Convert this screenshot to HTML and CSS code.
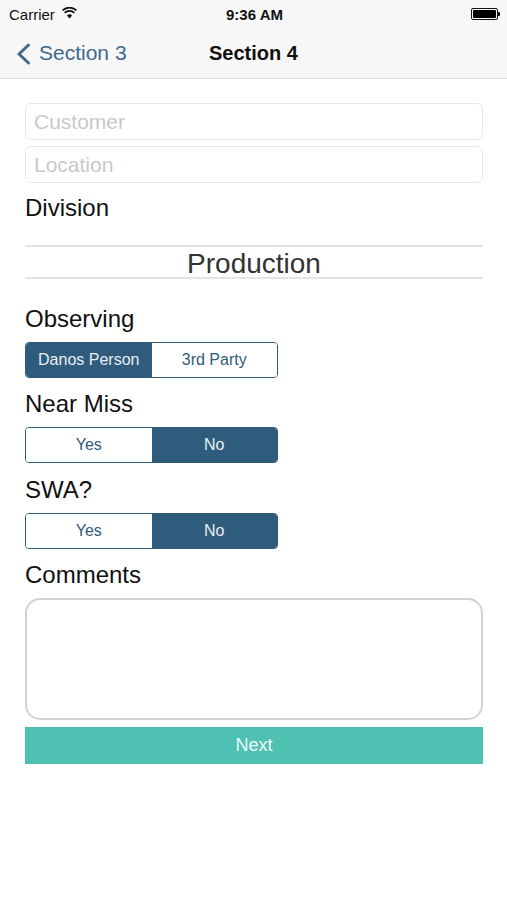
FILE: index.html
```html
<!DOCTYPE html>
<html>
<head>
<meta charset="utf-8">
<link rel="stylesheet" href="styles.css">
</head>
<body>
<div class="screen">
  <header class="topbar">
    <div class="status">
      <div class="status-left">
        <span class="carrier">Carrier</span>
        <svg class="wifi" width="15" height="12" viewBox="0 0 15 12">
          <path d="M7.5 11.5 L4.9 8.4 A4 4 0 0 1 10.1 8.4 Z" fill="#111"/>
          <path d="M2.6 5.9 A7 7 0 0 1 12.4 5.9" fill="none" stroke="#111" stroke-width="1.7"/>
          <path d="M0.6 3.4 A10 10 0 0 1 14.4 3.4" fill="none" stroke="#111" stroke-width="1.7"/>
        </svg>
      </div>
      <span class="time">9:36 AM</span>
      <div class="status-right">
        <span class="battery"><span class="battery-fill"></span></span><span class="battery-nub"></span>
      </div>
    </div>
    <nav class="nav">
      <div class="back">
        <svg class="chevron" width="17" height="22" viewBox="0 0 17 22">
          <path d="M13.5 2 L4 11 L13.5 20" fill="none" stroke="#3f6a8b" stroke-width="3" stroke-linecap="round" stroke-linejoin="round"/>
        </svg>
        <span class="back-label">Section 3</span>
      </div>
      <div class="title">Section 4</div>
      <div></div>
    </nav>
  </header>

  <main class="content">
    <div class="field"><span class="placeholder">Customer</span></div>
    <div class="field field-second"><span class="placeholder">Location</span></div>
    <div class="label label-division">Division</div>
    <div class="picker">Production</div>

    <div class="label label-first">Observing</div>
    <div class="segmented">
      <div class="seg active">Danos Person</div>
      <div class="seg">3rd Party</div>
    </div>

    <div class="label">Near Miss</div>
    <div class="segmented">
      <div class="seg">Yes</div>
      <div class="seg active">No</div>
    </div>

    <div class="label label-swa">SWA?</div>
    <div class="segmented">
      <div class="seg">Yes</div>
      <div class="seg active">No</div>
    </div>

    <div class="label">Comments</div>
    <div class="textarea"></div>
    <button class="next">Next</button>
  </main>
</div>
</body>
</html>
```

FILE: styles.css
```css
* { box-sizing: border-box; }

html, body {
  margin: 0;
  padding: 0;
  background: #ffffff;
}

body {
  font-family: "Liberation Sans", Arial, sans-serif;
  color: #111;
}

.screen {
  width: 507px;
  min-height: 900px;
  background: #fff;
}

.topbar {
  background: #f7f7f7;
  border-bottom: 1px solid #dcdcdc;
}

.status {
  height: 28px;
  display: grid;
  grid-template-columns: 1fr auto 1fr;
  align-items: center;
  padding: 0 7px 0 9px;
}

.status-left {
  display: flex;
  align-items: center;
  gap: 7px;
}

.carrier {
  font-size: 15px;
  color: #111;
}

.wifi { margin-top: -2px; }

.time {
  font-size: 15px;
  font-weight: bold;
  color: #111;
}

.status-right {
  display: flex;
  align-items: center;
  justify-content: flex-end;
}

.battery {
  width: 27px;
  height: 12px;
  border: 1px solid #111;
  border-radius: 2px;
  padding: 1px;
  display: flex;
}

.battery-fill {
  flex: 1;
  background: #000;
  border-radius: 1px;
}

.battery-nub {
  width: 2px;
  height: 4px;
  background: #111;
  border-radius: 0 1px 1px 0;
}

.nav {
  height: 50px;
  display: grid;
  grid-template-columns: 1fr auto 1fr;
  align-items: center;
}

.back {
  display: flex;
  align-items: center;
  gap: 7px;
  padding-left: 15px;
}

.chevron { margin-top: 1px; }

.back-label {
  font-size: 21px;
  color: #3f6a8b;
}

.title {
  font-size: 20px;
  font-weight: bold;
  color: #111;
}

.content {
  display: flex;
  flex-direction: column;
  padding: 24px 24px 0 25px;
}

.field {
  height: 37px;
  border: 1px solid #e8e8e8;
  border-radius: 6px;
  display: flex;
  align-items: center;
  padding-left: 8px;
}

.field-second { margin-top: 6px; }

.placeholder {
  font-size: 21px;
  color: #c8c8cc;
}

.label {
  font-size: 24px;
  line-height: 28px;
  color: #111;
  margin-top: 12px;
  margin-bottom: 9px;
}

.label-division {
  margin-top: 11px;
  margin-bottom: 23px;
}

.label-first { margin-top: 26px; }

.label-swa { margin-top: 13px; }

.picker {
  height: 34px;
  border-top: 2px solid #e4e4e4;
  border-bottom: 2px solid #e4e4e4;
  text-align: center;
  font-size: 28px;
  line-height: 30px;
  padding-top: 2px;
  color: #333;
}

.segmented {
  width: 253px;
  height: 36px;
  display: grid;
  grid-template-columns: 1fr 1fr;
  border: 1px solid #2f5b7c;
  border-radius: 4px;
  overflow: hidden;
}

.seg {
  display: flex;
  align-items: center;
  justify-content: center;
  font-size: 16px;
  color: #2f5b7c;
  background: #fff;
}

.seg.active {
  background: #2f5b7c;
  color: #e9eff4;
}

.textarea {
  height: 122px;
  border: 2px solid #d2d2d2;
  border-radius: 15px;
}

.next {
  margin-top: 7px;
  height: 37px;
  border: none;
  border-radius: 0;
  background: #4fc1b3;
  color: #eefaf8;
  font-family: "Liberation Sans", Arial, sans-serif;
  font-size: 18px;
  padding: 0;
}
```
